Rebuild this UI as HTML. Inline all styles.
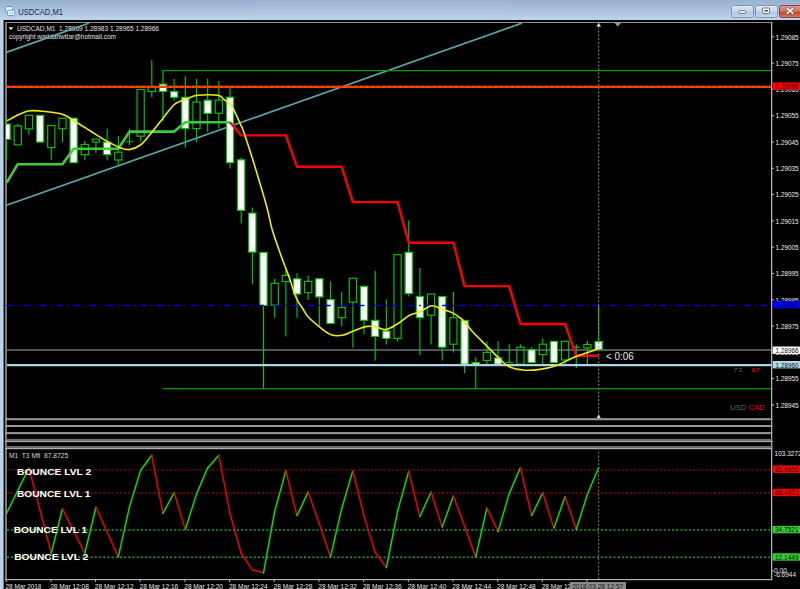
<!DOCTYPE html><html><head><meta charset="utf-8"><style>html,body{margin:0;padding:0;width:800px;height:589px;overflow:hidden;background:#bcd2e9}svg{display:block}text{font-family:'Liberation Sans',sans-serif}</style></head><body>
<svg width="800" height="589" viewBox="0 0 800 589">
<defs><linearGradient id="tg" x1="0" y1="0" x2="0" y2="1"><stop offset="0" stop-color="#97b1d0"/><stop offset="1" stop-color="#bed4eb"/></linearGradient><linearGradient id="bg" x1="0" y1="0" x2="0" y2="1"><stop offset="0" stop-color="#dfeaf6"/><stop offset="0.5" stop-color="#c3d6ec"/><stop offset="0.55" stop-color="#aec6e1"/><stop offset="1" stop-color="#c6d9ee"/></linearGradient><linearGradient id="cg" x1="0" y1="0" x2="0" y2="1"><stop offset="0" stop-color="#e6a090"/><stop offset="0.5" stop-color="#d26a55"/><stop offset="0.55" stop-color="#c0402a"/><stop offset="1" stop-color="#d87a5a"/></linearGradient><clipPath id="mc"><rect x="6" y="23" width="765.5" height="395"/></clipPath><clipPath id="ic"><rect x="7" y="448" width="764.5" height="131"/></clipPath></defs>
<rect x="0" y="0" width="800" height="20" fill="url(#tg)"/>
<g><rect x="5.4" y="6.6" width="7.4" height="5.6" rx="1" fill="#dfeafc" stroke="#5b8fe2" stroke-width="0.9"/><path d="M6.6 8.4 h1.2 M8.8 8.4 h1.2 M10.6 8.4 h1.2 M6.6 10.2 h1" stroke="#ffffff" stroke-width="1"/><rect x="7.6" y="10.3" width="7" height="5.3" rx="1" fill="#f2f6ff" stroke="#5b8fe2" stroke-width="0.9"/><path d="M9.4 13.6 l1.2 -1.2 l1.2 1.2 l1.2 -1" fill="none" stroke="#7aa6f0" stroke-width="0.9"/></g>
<text x="18.3" y="14.7" font-size="9.6" fill="#1e2a44" textLength="44.7" lengthAdjust="spacingAndGlyphs">USDCAD,M1</text>
<rect x="731.5" y="5.5" width="22" height="12" rx="2" fill="url(#bg)" stroke="#8298b0"/>
<rect x="738.8" y="10.8" width="7.2" height="2.6" rx="0.8" fill="#fff" stroke="#4c5868" stroke-width="0.8"/>
<rect x="755.5" y="5.5" width="22" height="12" rx="2" fill="url(#bg)" stroke="#8298b0"/>
<rect x="762.6" y="8" width="7" height="5.6" rx="0.8" fill="#fff" stroke="#4c5868" stroke-width="0.8"/>
<rect x="764.3" y="10" width="3.6" height="1.6" fill="#4c5868"/>
<rect x="779.5" y="5.5" width="24" height="12" rx="2" fill="url(#cg)" stroke="#7a4a52"/>
<path d="M787.2 8.5 L792.8 13.1 M792.8 8.5 L787.2 13.1" stroke="#6a5a66" stroke-width="2.9" stroke-linecap="round"/>
<path d="M787.2 8.5 L792.8 13.1 M792.8 8.5 L787.2 13.1" stroke="#f0f0f4" stroke-width="1.7" stroke-linecap="round"/>
<rect x="3" y="20" width="797" height="569" fill="#000"/>
<rect x="3" y="20" width="0.8" height="569" fill="#8c96a0"/>
<rect x="5" y="22" width="766.5" height="1" fill="#8e8e8e"/>
<rect x="5" y="22" width="2" height="557.6" fill="#7a7a7a"/>
<g clip-path="url(#mc)">
<line x1="6.5" y1="205.3" x2="521.7" y2="23.2" stroke="#5aa8a8" stroke-width="1.7"/>
<path d="M162.9 121.1 V70.6 H771" fill="none" stroke="#00a000" stroke-width="1.3"/>
<line x1="163" y1="388.6" x2="771" y2="388.6" stroke="#00a000" stroke-width="1.3"/>
<line x1="7" y1="350" x2="771" y2="350" stroke="#4c545c" stroke-width="2"/>
<line x1="162.9" y1="70.6" x2="162.9" y2="121.1" stroke="#008a00" stroke-width="1.3"/>
<line x1="6.6" y1="118.3" x2="6.6" y2="124" stroke="#00c800" stroke-width="1.15"/>
<line x1="6.6" y1="139.4" x2="6.6" y2="160" stroke="#00c800" stroke-width="1.15"/>
<rect x="3" y="124" width="7.2" height="15.4" fill="#fff" stroke="#00c800" stroke-width="1.15"/>
<line x1="17.77" y1="123.8" x2="17.77" y2="125.8" stroke="#00c800" stroke-width="1.15"/>
<rect x="14.17" y="125.8" width="7.2" height="19.1" fill="none" stroke="#00c800" stroke-width="1.15"/>
<line x1="28.94" y1="128.9" x2="28.94" y2="134.7" stroke="#00c800" stroke-width="1.15"/>
<rect x="25.34" y="115.3" width="7.2" height="13.6" fill="none" stroke="#00c800" stroke-width="1.15"/>
<rect x="36.51" y="115.3" width="7.2" height="26.7" fill="#fff" stroke="#00c800" stroke-width="1.15"/>
<line x1="51.28" y1="147.6" x2="51.28" y2="159.8" stroke="#00c800" stroke-width="1.15"/>
<rect x="47.68" y="125.5" width="7.2" height="22.1" fill="none" stroke="#00c800" stroke-width="1.15"/>
<line x1="62.45" y1="128.7" x2="62.45" y2="142" stroke="#00c800" stroke-width="1.15"/>
<rect x="58.85" y="118.2" width="7.2" height="10.5" fill="none" stroke="#00c800" stroke-width="1.15"/>
<rect x="70.02" y="118.2" width="7.2" height="44.5" fill="#fff" stroke="#00c800" stroke-width="1.15"/>
<line x1="84.79" y1="141" x2="84.79" y2="144.5" stroke="#00c800" stroke-width="1.15"/>
<line x1="84.79" y1="154.7" x2="84.79" y2="160.2" stroke="#00c800" stroke-width="1.15"/>
<rect x="81.19" y="144.5" width="7.2" height="10.2" fill="none" stroke="#00c800" stroke-width="1.15"/>
<line x1="95.96" y1="142" x2="95.96" y2="152.7" stroke="#00c800" stroke-width="1.15"/>
<rect x="92.36" y="139.1" width="7.2" height="2.9" fill="none" stroke="#00c800" stroke-width="1.15"/>
<line x1="107.13" y1="128.4" x2="107.13" y2="142" stroke="#00c800" stroke-width="1.15"/>
<line x1="107.13" y1="154.7" x2="107.13" y2="160.2" stroke="#00c800" stroke-width="1.15"/>
<rect x="103.53" y="142" width="7.2" height="12.7" fill="#fff" stroke="#00c800" stroke-width="1.15"/>
<line x1="118.3" y1="136" x2="118.3" y2="152.2" stroke="#00c800" stroke-width="1.15"/>
<line x1="118.3" y1="160" x2="118.3" y2="165.3" stroke="#00c800" stroke-width="1.15"/>
<rect x="114.7" y="152.2" width="7.2" height="7.8" fill="none" stroke="#00c800" stroke-width="1.15"/>
<line x1="129.47" y1="128.4" x2="129.47" y2="145" stroke="#00c800" stroke-width="1.15"/>
<line x1="125.87" y1="141.7" x2="133.07" y2="141.7" stroke="#00c800" stroke-width="1.15"/>
<line x1="140.64" y1="136.2" x2="140.64" y2="141.7" stroke="#00c800" stroke-width="1.15"/>
<rect x="137.04" y="89.5" width="7.2" height="46.7" fill="none" stroke="#00c800" stroke-width="1.15"/>
<line x1="151.81" y1="60.2" x2="151.81" y2="86.7" stroke="#00c800" stroke-width="1.15"/>
<line x1="151.81" y1="91.5" x2="151.81" y2="97.3" stroke="#00c800" stroke-width="1.15"/>
<rect x="148.21" y="86.7" width="7.2" height="4.8" fill="none" stroke="#00c800" stroke-width="1.15"/>
<rect x="159.38" y="84.1" width="7.2" height="7.4" fill="#fff" stroke="#00c800" stroke-width="1.15"/>
<line x1="174.15" y1="79" x2="174.15" y2="91.5" stroke="#00c800" stroke-width="1.15"/>
<line x1="174.15" y1="97.3" x2="174.15" y2="100.5" stroke="#00c800" stroke-width="1.15"/>
<rect x="170.55" y="91.5" width="7.2" height="5.8" fill="#fff" stroke="#00c800" stroke-width="1.15"/>
<line x1="185.32" y1="76.2" x2="185.32" y2="97.3" stroke="#00c800" stroke-width="1.15"/>
<line x1="185.32" y1="128.6" x2="185.32" y2="147.5" stroke="#00c800" stroke-width="1.15"/>
<rect x="181.72" y="97.3" width="7.2" height="31.3" fill="#fff" stroke="#00c800" stroke-width="1.15"/>
<line x1="196.49" y1="78.8" x2="196.49" y2="102" stroke="#00c800" stroke-width="1.15"/>
<line x1="196.49" y1="128.6" x2="196.49" y2="142.2" stroke="#00c800" stroke-width="1.15"/>
<rect x="192.89" y="102" width="7.2" height="26.6" fill="none" stroke="#00c800" stroke-width="1.15"/>
<line x1="207.66" y1="78.8" x2="207.66" y2="100.2" stroke="#00c800" stroke-width="1.15"/>
<line x1="207.66" y1="113.4" x2="207.66" y2="131.7" stroke="#00c800" stroke-width="1.15"/>
<rect x="204.06" y="100.2" width="7.2" height="13.2" fill="#fff" stroke="#00c800" stroke-width="1.15"/>
<line x1="218.83" y1="81.1" x2="218.83" y2="100.1" stroke="#00c800" stroke-width="1.15"/>
<line x1="218.83" y1="113.2" x2="218.83" y2="128.4" stroke="#00c800" stroke-width="1.15"/>
<rect x="215.23" y="100.1" width="7.2" height="13.1" fill="none" stroke="#00c800" stroke-width="1.15"/>
<line x1="230" y1="86.9" x2="230" y2="97.2" stroke="#00c800" stroke-width="1.15"/>
<line x1="230" y1="162.7" x2="230" y2="168.6" stroke="#00c800" stroke-width="1.15"/>
<rect x="226.4" y="97.2" width="7.2" height="65.5" fill="#fff" stroke="#00c800" stroke-width="1.15"/>
<line x1="241.17" y1="157.6" x2="241.17" y2="159.8" stroke="#00c800" stroke-width="1.15"/>
<line x1="241.17" y1="210.3" x2="241.17" y2="223.6" stroke="#00c800" stroke-width="1.15"/>
<rect x="237.57" y="159.8" width="7.2" height="50.5" fill="#fff" stroke="#00c800" stroke-width="1.15"/>
<line x1="252.34" y1="207.4" x2="252.34" y2="213.1" stroke="#00c800" stroke-width="1.15"/>
<line x1="252.34" y1="252.1" x2="252.34" y2="283.9" stroke="#00c800" stroke-width="1.15"/>
<rect x="248.74" y="213.1" width="7.2" height="39" fill="#fff" stroke="#00c800" stroke-width="1.15"/>
<line x1="263.51" y1="305.4" x2="263.51" y2="388.4" stroke="#00c800" stroke-width="1.15"/>
<rect x="259.91" y="252.4" width="7.2" height="53" fill="#fff" stroke="#00c800" stroke-width="1.15"/>
<line x1="274.68" y1="278.8" x2="274.68" y2="283.3" stroke="#00c800" stroke-width="1.15"/>
<line x1="274.68" y1="305.1" x2="274.68" y2="317.8" stroke="#00c800" stroke-width="1.15"/>
<rect x="271.08" y="283.3" width="7.2" height="21.8" fill="none" stroke="#00c800" stroke-width="1.15"/>
<line x1="285.85" y1="268.6" x2="285.85" y2="275.4" stroke="#00c800" stroke-width="1.15"/>
<line x1="285.85" y1="281.6" x2="285.85" y2="336.5" stroke="#00c800" stroke-width="1.15"/>
<rect x="282.25" y="275.4" width="7.2" height="6.2" fill="none" stroke="#00c800" stroke-width="1.15"/>
<line x1="297.02" y1="273.2" x2="297.02" y2="278.8" stroke="#00c800" stroke-width="1.15"/>
<line x1="297.02" y1="294" x2="297.02" y2="317.8" stroke="#00c800" stroke-width="1.15"/>
<rect x="293.42" y="278.8" width="7.2" height="15.2" fill="#fff" stroke="#00c800" stroke-width="1.15"/>
<line x1="308.19" y1="275.4" x2="308.19" y2="281.3" stroke="#00c800" stroke-width="1.15"/>
<line x1="308.19" y1="292.7" x2="308.19" y2="300" stroke="#00c800" stroke-width="1.15"/>
<rect x="304.59" y="281.3" width="7.2" height="11.4" fill="none" stroke="#00c800" stroke-width="1.15"/>
<line x1="319.36" y1="296.9" x2="319.36" y2="326.3" stroke="#00c800" stroke-width="1.15"/>
<rect x="315.76" y="278.8" width="7.2" height="18.1" fill="#fff" stroke="#00c800" stroke-width="1.15"/>
<line x1="330.53" y1="281.3" x2="330.53" y2="299.6" stroke="#00c800" stroke-width="1.15"/>
<rect x="326.93" y="299.6" width="7.2" height="23.8" fill="#fff" stroke="#00c800" stroke-width="1.15"/>
<line x1="341.7" y1="291.9" x2="341.7" y2="307.5" stroke="#00c800" stroke-width="1.15"/>
<line x1="341.7" y1="317.7" x2="341.7" y2="326.2" stroke="#00c800" stroke-width="1.15"/>
<rect x="338.1" y="307.5" width="7.2" height="10.2" fill="none" stroke="#00c800" stroke-width="1.15"/>
<line x1="352.87" y1="302.1" x2="352.87" y2="347.4" stroke="#00c800" stroke-width="1.15"/>
<rect x="349.27" y="278.3" width="7.2" height="23.8" fill="none" stroke="#00c800" stroke-width="1.15"/>
<line x1="364.04" y1="320.3" x2="364.04" y2="333.9" stroke="#00c800" stroke-width="1.15"/>
<rect x="360.44" y="286.3" width="7.2" height="34" fill="#fff" stroke="#00c800" stroke-width="1.15"/>
<line x1="375.21" y1="271" x2="375.21" y2="320.3" stroke="#00c800" stroke-width="1.15"/>
<line x1="375.21" y1="336.4" x2="375.21" y2="360.5" stroke="#00c800" stroke-width="1.15"/>
<rect x="371.61" y="320.3" width="7.2" height="16.1" fill="#fff" stroke="#00c800" stroke-width="1.15"/>
<line x1="386.38" y1="299.4" x2="386.38" y2="331" stroke="#00c800" stroke-width="1.15"/>
<line x1="386.38" y1="338.4" x2="386.38" y2="344.5" stroke="#00c800" stroke-width="1.15"/>
<rect x="382.78" y="331" width="7.2" height="7.4" fill="#fff" stroke="#00c800" stroke-width="1.15"/>
<line x1="397.55" y1="338.4" x2="397.55" y2="341.6" stroke="#00c800" stroke-width="1.15"/>
<rect x="393.95" y="254.7" width="7.2" height="83.7" fill="none" stroke="#00c800" stroke-width="1.15"/>
<line x1="408.72" y1="220.4" x2="408.72" y2="252.2" stroke="#00c800" stroke-width="1.15"/>
<line x1="408.72" y1="293.6" x2="408.72" y2="296.5" stroke="#00c800" stroke-width="1.15"/>
<rect x="405.12" y="252.2" width="7.2" height="41.4" fill="#fff" stroke="#00c800" stroke-width="1.15"/>
<line x1="419.89" y1="268" x2="419.89" y2="296.5" stroke="#00c800" stroke-width="1.15"/>
<line x1="419.89" y1="317.7" x2="419.89" y2="355" stroke="#00c800" stroke-width="1.15"/>
<rect x="416.29" y="296.5" width="7.2" height="21.2" fill="#fff" stroke="#00c800" stroke-width="1.15"/>
<line x1="431.06" y1="315.2" x2="431.06" y2="344.5" stroke="#00c800" stroke-width="1.15"/>
<rect x="427.46" y="294" width="7.2" height="21.2" fill="none" stroke="#00c800" stroke-width="1.15"/>
<line x1="442.23" y1="347.2" x2="442.23" y2="360.5" stroke="#00c800" stroke-width="1.15"/>
<rect x="438.63" y="296.5" width="7.2" height="50.7" fill="#fff" stroke="#00c800" stroke-width="1.15"/>
<line x1="453.4" y1="291.9" x2="453.4" y2="317.7" stroke="#00c800" stroke-width="1.15"/>
<line x1="453.4" y1="344.2" x2="453.4" y2="352.4" stroke="#00c800" stroke-width="1.15"/>
<rect x="449.8" y="317.7" width="7.2" height="26.5" fill="none" stroke="#00c800" stroke-width="1.15"/>
<line x1="464.57" y1="364.2" x2="464.57" y2="373" stroke="#00c800" stroke-width="1.15"/>
<rect x="460.97" y="320.4" width="7.2" height="43.8" fill="#fff" stroke="#00c800" stroke-width="1.15"/>
<line x1="475.74" y1="357.3" x2="475.74" y2="362.5" stroke="#00c800" stroke-width="1.15"/>
<line x1="475.74" y1="364.3" x2="475.74" y2="388.6" stroke="#00c800" stroke-width="1.15"/>
<rect x="472.14" y="362.5" width="7.2" height="1.8" fill="#fff" stroke="#00c800" stroke-width="1.15"/>
<line x1="486.91" y1="341.4" x2="486.91" y2="352.4" stroke="#00c800" stroke-width="1.15"/>
<line x1="486.91" y1="360.4" x2="486.91" y2="364.2" stroke="#00c800" stroke-width="1.15"/>
<rect x="483.31" y="352.4" width="7.2" height="8" fill="none" stroke="#00c800" stroke-width="1.15"/>
<line x1="498.08" y1="341.3" x2="498.08" y2="357.9" stroke="#00c800" stroke-width="1.15"/>
<rect x="494.48" y="357.9" width="7.2" height="6.3" fill="#fff" stroke="#00c800" stroke-width="1.15"/>
<line x1="509.25" y1="344.2" x2="509.25" y2="362.5" stroke="#00c800" stroke-width="1.15"/>
<line x1="505.65" y1="362.5" x2="512.85" y2="362.5" stroke="#00c800" stroke-width="1.15"/>
<line x1="520.42" y1="344.2" x2="520.42" y2="347.2" stroke="#00c800" stroke-width="1.15"/>
<rect x="516.82" y="347.2" width="7.2" height="17" fill="none" stroke="#00c800" stroke-width="1.15"/>
<line x1="531.59" y1="347.2" x2="531.59" y2="349.8" stroke="#00c800" stroke-width="1.15"/>
<rect x="527.99" y="349.8" width="7.2" height="12.7" fill="#fff" stroke="#00c800" stroke-width="1.15"/>
<line x1="542.76" y1="338.4" x2="542.76" y2="344.2" stroke="#00c800" stroke-width="1.15"/>
<line x1="542.76" y1="354.6" x2="542.76" y2="364.2" stroke="#00c800" stroke-width="1.15"/>
<rect x="539.16" y="344.2" width="7.2" height="10.4" fill="none" stroke="#00c800" stroke-width="1.15"/>
<rect x="550.33" y="341.3" width="7.2" height="21.2" fill="#fff" stroke="#00c800" stroke-width="1.15"/>
<line x1="565.1" y1="360" x2="565.1" y2="364.2" stroke="#00c800" stroke-width="1.15"/>
<rect x="561.5" y="341.3" width="7.2" height="18.7" fill="none" stroke="#00c800" stroke-width="1.15"/>
<line x1="576.27" y1="344.2" x2="576.27" y2="368.2" stroke="#00c800" stroke-width="1.15"/>
<line x1="572.67" y1="347.2" x2="579.87" y2="347.2" stroke="#00c800" stroke-width="1.15"/>
<line x1="587.44" y1="341" x2="587.44" y2="344.5" stroke="#00c800" stroke-width="1.15"/>
<line x1="587.44" y1="347.9" x2="587.44" y2="364.2" stroke="#00c800" stroke-width="1.15"/>
<rect x="583.84" y="344.5" width="7.2" height="3.4" fill="none" stroke="#00c800" stroke-width="1.15"/>
<line x1="598.61" y1="305.4" x2="598.61" y2="341.5" stroke="#00c800" stroke-width="1.15"/>
<rect x="595.01" y="341.5" width="7.2" height="8.1" fill="#fff" stroke="#00c800" stroke-width="1.15"/>
<line x1="7" y1="86.8" x2="771" y2="86.8" stroke="#ff3400" stroke-width="2.3"/>
<line x1="7" y1="86.8" x2="771" y2="86.8" stroke="#ff4a0c" stroke-width="2.3" stroke-dasharray="3 2.6"/>
<line x1="6.15" y1="305.5" x2="771" y2="305.5" stroke="#0000d8" stroke-width="1.5" stroke-dasharray="6.2 4.4 1.8 4.365"/>
<line x1="7" y1="365.2" x2="771" y2="365.2" stroke="#a8d4e6" stroke-width="2.2"/>
<polyline points="6.6,182.8 17.77,164.2 28.94,164.2 40.11,164.2 51.28,164.2 62.45,164.2 73.62,148.8 84.79,148.8 95.96,148.8 107.13,148.8 118.3,148.8 129.47,131.6 140.64,131.6 151.81,131.6 162.98,131.6 174.15,131.6 185.32,122.2 196.49,122.2 207.66,122.2 218.83,122.2 230,122.2" fill="none" stroke="#3ccc3c" stroke-width="2.6" stroke-linejoin="round"/>
<polyline points="230,122.2 241.17,135.4 252.34,135.4 263.51,135.4 274.68,135.4 285.85,135.4 297.02,166.7 308.19,166.7 319.36,166.7 330.53,166.7 341.7,166.7 352.87,202.1 364.04,202.1 375.21,202.1 386.38,202.1 397.55,202.1 408.72,242.8 419.89,242.8 431.06,242.8 442.23,242.8 453.4,242.8 464.57,286.1 475.74,286.1 486.91,286.1 498.08,286.1 509.25,286.1 520.42,324 531.59,324 542.76,324 553.93,324 565.1,324 576.27,355.8 587.44,355.8 598.61,355.8" fill="none" stroke="#ff0000" stroke-width="2.4" stroke-linejoin="round"/>
<path d="M7 120.8 C8.63 119.93 13.3 117.23 16.8 115.6 C20.3 113.97 24.27 111.78 28 111 C31.73 110.22 33.6 110.38 39.2 110.9 C44.8 111.42 55.68 112.38 61.6 114.1 C67.52 115.82 70.02 118.47 74.7 121.2 C79.38 123.93 84.72 127.38 89.7 130.5 C94.68 133.62 99.63 137.08 104.6 139.9 C109.57 142.72 115.38 145.78 119.5 147.4 C123.62 149.02 125.82 150 129.3 149.6 C132.78 149.2 136.95 147.52 140.4 145 C143.85 142.48 146.13 139.1 150 134.5 C153.87 129.9 159.63 122.32 163.6 117.4 C167.57 112.48 171.07 107.67 173.8 105 C176.53 102.33 177.65 102.5 180 101.4 C182.35 100.3 185.03 99.42 187.9 98.4 C190.77 97.38 192.25 95.82 197.2 95.3 C202.15 94.78 213.27 94.72 217.6 95.3 C221.93 95.88 221.37 97.53 223.2 98.8 C225.03 100.07 227.13 101.65 228.6 102.9 C230.07 104.15 230.87 104.6 232 106.3 C233.13 108 234.27 110.72 235.4 113.1 C236.53 115.48 237.55 117.87 238.8 120.6 C240.05 123.33 241.77 126.67 242.9 129.5 C244.03 132.33 244.5 134.27 245.6 137.6 C246.7 140.93 248.17 145.38 249.5 149.5 C250.83 153.62 252.07 157.35 253.6 162.3 C255.13 167.25 257 173.55 258.7 179.2 C260.4 184.85 262.25 190.82 263.8 196.2 C265.35 201.58 266.58 205.87 268 211.5 C269.42 217.13 270.12 222.62 272.3 230 C274.48 237.38 278.35 248.1 281.1 255.8 C283.85 263.5 286.25 269.12 288.8 276.2 C291.35 283.28 294 292.78 296.4 298.3 C298.8 303.82 301.22 306.18 303.2 309.3 C305.18 312.42 305.18 313.73 308.3 317 C311.42 320.27 318.08 325.93 321.9 328.9 C325.72 331.87 327.82 333.73 331.2 334.8 C334.58 335.87 338.73 335.83 342.2 335.3 C345.67 334.77 348.12 333.05 352 331.6 C355.88 330.15 361.67 327.43 365.5 326.6 C369.33 325.77 371.62 326.1 375 326.6 C378.38 327.1 382.02 330.08 385.8 329.6 C389.58 329.12 393.73 326.1 397.7 323.7 C401.67 321.3 405.92 317.18 409.6 315.2 C413.28 313.22 416.12 313.37 419.8 311.8 C423.48 310.23 428.02 306.23 431.7 305.8 C435.38 305.37 438.52 308.07 441.9 309.2 C445.28 310.33 448.62 310.9 452 312.6 C455.38 314.3 458.6 316.03 462.2 319.4 C465.8 322.77 469.43 328.3 473.6 332.8 C477.77 337.3 482.97 342.15 487.2 346.4 C491.43 350.65 495.33 354.9 499 358.3 C502.67 361.7 505.23 364.85 509.2 366.8 C513.17 368.75 517.98 369.53 522.8 370 C527.62 370.47 532.72 370.28 538.1 369.6 C543.48 368.92 548.67 368.12 555.1 365.9 C561.53 363.68 569.48 359.15 576.7 356.3 C583.92 353.45 594.78 350.05 598.4 348.8" fill="none" stroke="#eeee00" stroke-width="1.6" stroke-linejoin="round"/>
<line x1="598.7" y1="23" x2="598.7" y2="418" stroke="#8a8a8a" stroke-width="1.1" stroke-dasharray="1.8 2"/>
<path d="M596.3 26.5 L598.7 23.2 L601.1 26.5 Z" fill="#e8e8e8"/>
<path d="M614.5 23 L621 23 L617.7 26.6 Z" fill="#8a9ab0"/>
<path d="M596.9 418.3 L598.7 415.2 L600.5 418.3 Z" fill="#f0f0f0" stroke="#f0f0f0" stroke-width="0.6" stroke-linejoin="round"/>
<path d="M8.6 27.3 L13.2 27.3 L10.9 30.3 Z" fill="#e8e8e8"/>
<text x="17" y="31" font-size="7" fill="#e4e4e4" textLength="142" lengthAdjust="spacingAndGlyphs" style="white-space:pre">USDCAD,M1  1.28969 1.28983 1.28965 1.28966</text>
<text x="9" y="39.1" font-size="7" fill="#e0e0e0" textLength="107" lengthAdjust="spacingAndGlyphs">copyright waddahwttar@hotmail.com</text>
<line x1="6.25" y1="52.4" x2="88.75" y2="23.25" stroke="#5aa8a8" stroke-width="1.7"/>
<text x="605.9" y="359.6" font-size="11.6" fill="#e6e6e6" textLength="27.9" lengthAdjust="spacingAndGlyphs">&lt; 0:06</text>
<text x="734" y="371.8" font-size="5.8" fill="#6a6a6a">7.3</text>
<text x="751.5" y="371.8" font-size="5.8" font-weight="bold" fill="#e00000">0.7</text>
<text x="730.3" y="410.4" font-size="7.6" fill="#5c6470">USD</text>
<text x="748.5" y="410.4" font-size="7.6" fill="#ee0000">CAD</text>
</g>
<rect x="771" y="22" width="1.3" height="558" fill="#b0b0b0"/>
<rect x="5" y="579" width="767.3" height="1.2" fill="#b0b0b0"/>
<rect x="5" y="418.2" width="767.3" height="2" fill="#9a9a9a"/>
<rect x="5" y="425" width="767.3" height="2" fill="#9a9a9a"/>
<rect x="5" y="432.1" width="767.3" height="2" fill="#9a9a9a"/>
<rect x="5" y="438.8" width="767.3" height="1.8" fill="#6c6c6c"/>
<rect x="5" y="440.6" width="767.3" height="1.5" fill="#b0b0b0"/>
<rect x="5" y="445.9" width="767.3" height="1.8" fill="#6c6c6c"/>
<rect x="5" y="447.7" width="767.3" height="1.5" fill="#b0b0b0"/>
<rect x="772" y="36.3" width="2.2" height="1" fill="#b0b0b0"/>
<text x="775.6" y="39.6" font-size="7.2" fill="#ececec" textLength="23" lengthAdjust="spacingAndGlyphs">1.29085</text>
<rect x="772" y="62.59" width="2.2" height="1" fill="#b0b0b0"/>
<text x="775.6" y="65.89" font-size="7.2" fill="#ececec" textLength="23" lengthAdjust="spacingAndGlyphs">1.29075</text>
<rect x="772" y="88.89" width="2.2" height="1" fill="#b0b0b0"/>
<text x="775.6" y="92.19" font-size="7.2" fill="#ececec" textLength="23" lengthAdjust="spacingAndGlyphs">1.29065</text>
<rect x="772" y="115.18" width="2.2" height="1" fill="#b0b0b0"/>
<text x="775.6" y="118.48" font-size="7.2" fill="#ececec" textLength="23" lengthAdjust="spacingAndGlyphs">1.29055</text>
<rect x="772" y="141.47" width="2.2" height="1" fill="#b0b0b0"/>
<text x="775.6" y="144.77" font-size="7.2" fill="#ececec" textLength="23" lengthAdjust="spacingAndGlyphs">1.29045</text>
<rect x="772" y="167.76" width="2.2" height="1" fill="#b0b0b0"/>
<text x="775.6" y="171.06" font-size="7.2" fill="#ececec" textLength="23" lengthAdjust="spacingAndGlyphs">1.29035</text>
<rect x="772" y="194.06" width="2.2" height="1" fill="#b0b0b0"/>
<text x="775.6" y="197.36" font-size="7.2" fill="#ececec" textLength="23" lengthAdjust="spacingAndGlyphs">1.29025</text>
<rect x="772" y="220.35" width="2.2" height="1" fill="#b0b0b0"/>
<text x="775.6" y="223.65" font-size="7.2" fill="#ececec" textLength="23" lengthAdjust="spacingAndGlyphs">1.29015</text>
<rect x="772" y="246.64" width="2.2" height="1" fill="#b0b0b0"/>
<text x="775.6" y="249.94" font-size="7.2" fill="#ececec" textLength="23" lengthAdjust="spacingAndGlyphs">1.29005</text>
<rect x="772" y="272.94" width="2.2" height="1" fill="#b0b0b0"/>
<text x="775.6" y="276.24" font-size="7.2" fill="#ececec" textLength="23" lengthAdjust="spacingAndGlyphs">1.28995</text>
<rect x="772" y="299.23" width="2.2" height="1" fill="#b0b0b0"/>
<text x="775.6" y="302.53" font-size="7.2" fill="#ececec" textLength="23" lengthAdjust="spacingAndGlyphs">1.28985</text>
<rect x="772" y="325.52" width="2.2" height="1" fill="#b0b0b0"/>
<text x="775.6" y="328.82" font-size="7.2" fill="#ececec" textLength="23" lengthAdjust="spacingAndGlyphs">1.28975</text>
<rect x="772" y="351.82" width="2.2" height="1" fill="#b0b0b0"/>
<text x="775.6" y="355.12" font-size="7.2" fill="#ececec" textLength="23" lengthAdjust="spacingAndGlyphs">1.28965</text>
<rect x="772" y="378.11" width="2.2" height="1" fill="#b0b0b0"/>
<text x="775.6" y="381.41" font-size="7.2" fill="#ececec" textLength="23" lengthAdjust="spacingAndGlyphs">1.28955</text>
<rect x="772" y="404.4" width="2.2" height="1" fill="#b0b0b0"/>
<text x="775.6" y="407.7" font-size="7.2" fill="#ececec" textLength="23" lengthAdjust="spacingAndGlyphs">1.28945</text>
<rect x="772.6" y="82.5" width="27.4" height="7.4" fill="#ff0000"/>
<text x="775.6" y="89" font-size="7.2" fill="#101010" textLength="23" lengthAdjust="spacingAndGlyphs">1.29066</text>
<rect x="772.6" y="300.9" width="27.4" height="7.4" fill="#0000ff"/>
<text x="775.6" y="307.4" font-size="7.2" fill="#000040" textLength="23" lengthAdjust="spacingAndGlyphs">1.28983</text>
<rect x="772.6" y="346.5" width="27.4" height="7.4" fill="#ffffff"/>
<text x="775.6" y="353" font-size="7.2" fill="#101010" textLength="23" lengthAdjust="spacingAndGlyphs">1.28966</text>
<rect x="772.6" y="361" width="27.4" height="7.4" fill="#add8e6"/>
<text x="775.6" y="367.5" font-size="7.2" fill="#101010" textLength="23" lengthAdjust="spacingAndGlyphs">1.28960</text>
<g clip-path="url(#ic)">
<line x1="7" y1="469.9" x2="771" y2="469.9" stroke="#980000" stroke-width="1.4" stroke-dasharray="2 2.183"/>
<line x1="7" y1="493" x2="771" y2="493" stroke="#980000" stroke-width="1.4" stroke-dasharray="2 2.183"/>
<line x1="7" y1="530" x2="771" y2="530" stroke="#2c9c2c" stroke-width="1.4" stroke-dasharray="2 2.183"/>
<line x1="7" y1="557.2" x2="771" y2="557.2" stroke="#2c9c2c" stroke-width="1.4" stroke-dasharray="2 2.183"/>
<line x1="598.6" y1="448" x2="598.6" y2="579" stroke="#7a7a7a" stroke-width="1.1" stroke-dasharray="1.8 2"/>
<line x1="6.6" y1="513.3" x2="17.77" y2="490.6" stroke="#00e000" stroke-width="1.5" stroke-linecap="round"/>
<line x1="17.77" y1="490.6" x2="28.94" y2="467.9" stroke="#00e000" stroke-width="1.5" stroke-linecap="round"/>
<line x1="28.94" y1="467.9" x2="40.11" y2="510.5" stroke="#ee0000" stroke-width="1.5" stroke-linecap="round"/>
<line x1="40.11" y1="510.5" x2="51.28" y2="553.2" stroke="#ee0000" stroke-width="1.5" stroke-linecap="round"/>
<line x1="51.28" y1="553.2" x2="62.45" y2="508.7" stroke="#00e000" stroke-width="1.5" stroke-linecap="round"/>
<line x1="62.45" y1="508.7" x2="73.62" y2="531" stroke="#ee0000" stroke-width="1.5" stroke-linecap="round"/>
<line x1="73.62" y1="531" x2="84.79" y2="553.2" stroke="#ee0000" stroke-width="1.5" stroke-linecap="round"/>
<line x1="84.79" y1="553.2" x2="95.96" y2="507.3" stroke="#00e000" stroke-width="1.5" stroke-linecap="round"/>
<line x1="95.96" y1="507.3" x2="107.13" y2="532" stroke="#ee0000" stroke-width="1.5" stroke-linecap="round"/>
<line x1="107.13" y1="532" x2="118.3" y2="556.9" stroke="#ee0000" stroke-width="1.5" stroke-linecap="round"/>
<line x1="118.3" y1="556.9" x2="129.47" y2="506.9" stroke="#00e000" stroke-width="1.5" stroke-linecap="round"/>
<line x1="129.47" y1="506.9" x2="140.64" y2="470.2" stroke="#00e000" stroke-width="1.5" stroke-linecap="round"/>
<line x1="140.64" y1="470.2" x2="151.81" y2="455.3" stroke="#00e000" stroke-width="1.5" stroke-linecap="round"/>
<line x1="151.81" y1="455.3" x2="162.98" y2="513.3" stroke="#ee0000" stroke-width="1.5" stroke-linecap="round"/>
<line x1="162.98" y1="513.3" x2="174.15" y2="492.7" stroke="#00e000" stroke-width="1.5" stroke-linecap="round"/>
<line x1="174.15" y1="492.7" x2="185.32" y2="529.4" stroke="#ee0000" stroke-width="1.5" stroke-linecap="round"/>
<line x1="185.32" y1="529.4" x2="196.49" y2="494.3" stroke="#00e000" stroke-width="1.5" stroke-linecap="round"/>
<line x1="196.49" y1="494.3" x2="207.66" y2="467.9" stroke="#00e000" stroke-width="1.5" stroke-linecap="round"/>
<line x1="207.66" y1="467.9" x2="218.83" y2="455.3" stroke="#00e000" stroke-width="1.5" stroke-linecap="round"/>
<line x1="218.83" y1="455.3" x2="230" y2="513.3" stroke="#ee0000" stroke-width="1.5" stroke-linecap="round"/>
<line x1="230" y1="513.3" x2="241.17" y2="553.2" stroke="#ee0000" stroke-width="1.5" stroke-linecap="round"/>
<line x1="241.17" y1="553.2" x2="252.34" y2="569.9" stroke="#ee0000" stroke-width="1.5" stroke-linecap="round"/>
<line x1="252.34" y1="569.9" x2="263.51" y2="572.9" stroke="#ee0000" stroke-width="1.5" stroke-linecap="round"/>
<line x1="263.51" y1="572.9" x2="274.68" y2="511.5" stroke="#00e000" stroke-width="1.5" stroke-linecap="round"/>
<line x1="274.68" y1="511.5" x2="285.85" y2="470.7" stroke="#00e000" stroke-width="1.5" stroke-linecap="round"/>
<line x1="285.85" y1="470.7" x2="297.02" y2="515.6" stroke="#ee0000" stroke-width="1.5" stroke-linecap="round"/>
<line x1="297.02" y1="515.6" x2="308.19" y2="492" stroke="#00e000" stroke-width="1.5" stroke-linecap="round"/>
<line x1="308.19" y1="492" x2="319.36" y2="524" stroke="#ee0000" stroke-width="1.5" stroke-linecap="round"/>
<line x1="319.36" y1="524" x2="330.53" y2="556.9" stroke="#ee0000" stroke-width="1.5" stroke-linecap="round"/>
<line x1="330.53" y1="556.9" x2="341.7" y2="508.7" stroke="#00e000" stroke-width="1.5" stroke-linecap="round"/>
<line x1="341.7" y1="508.7" x2="352.87" y2="470.7" stroke="#00e000" stroke-width="1.5" stroke-linecap="round"/>
<line x1="352.87" y1="470.7" x2="364.04" y2="516" stroke="#ee0000" stroke-width="1.5" stroke-linecap="round"/>
<line x1="364.04" y1="516" x2="375.21" y2="552.3" stroke="#ee0000" stroke-width="1.5" stroke-linecap="round"/>
<line x1="375.21" y1="552.3" x2="386.38" y2="567.6" stroke="#ee0000" stroke-width="1.5" stroke-linecap="round"/>
<line x1="386.38" y1="567.6" x2="397.55" y2="511.5" stroke="#00e000" stroke-width="1.5" stroke-linecap="round"/>
<line x1="397.55" y1="511.5" x2="408.72" y2="471.4" stroke="#00e000" stroke-width="1.5" stroke-linecap="round"/>
<line x1="408.72" y1="471.4" x2="419.89" y2="516.5" stroke="#ee0000" stroke-width="1.5" stroke-linecap="round"/>
<line x1="419.89" y1="516.5" x2="431.06" y2="492" stroke="#00e000" stroke-width="1.5" stroke-linecap="round"/>
<line x1="431.06" y1="492" x2="442.23" y2="527.1" stroke="#ee0000" stroke-width="1.5" stroke-linecap="round"/>
<line x1="442.23" y1="527.1" x2="453.4" y2="495.9" stroke="#00e000" stroke-width="1.5" stroke-linecap="round"/>
<line x1="453.4" y1="495.9" x2="464.57" y2="526" stroke="#ee0000" stroke-width="1.5" stroke-linecap="round"/>
<line x1="464.57" y1="526" x2="475.74" y2="556.9" stroke="#ee0000" stroke-width="1.5" stroke-linecap="round"/>
<line x1="475.74" y1="556.9" x2="486.91" y2="508" stroke="#00e000" stroke-width="1.5" stroke-linecap="round"/>
<line x1="486.91" y1="508" x2="498.08" y2="531.6" stroke="#ee0000" stroke-width="1.5" stroke-linecap="round"/>
<line x1="498.08" y1="531.6" x2="509.25" y2="493.6" stroke="#00e000" stroke-width="1.5" stroke-linecap="round"/>
<line x1="509.25" y1="493.6" x2="520.42" y2="467.5" stroke="#00e000" stroke-width="1.5" stroke-linecap="round"/>
<line x1="520.42" y1="467.5" x2="531.59" y2="515.6" stroke="#ee0000" stroke-width="1.5" stroke-linecap="round"/>
<line x1="531.59" y1="515.6" x2="542.76" y2="492.7" stroke="#00e000" stroke-width="1.5" stroke-linecap="round"/>
<line x1="542.76" y1="492.7" x2="553.93" y2="528" stroke="#ee0000" stroke-width="1.5" stroke-linecap="round"/>
<line x1="553.93" y1="528" x2="565.1" y2="496.6" stroke="#00e000" stroke-width="1.5" stroke-linecap="round"/>
<line x1="565.1" y1="496.6" x2="576.27" y2="529.4" stroke="#ee0000" stroke-width="1.5" stroke-linecap="round"/>
<line x1="576.27" y1="529.4" x2="587.44" y2="494.3" stroke="#00e000" stroke-width="1.5" stroke-linecap="round"/>
<line x1="587.44" y1="494.3" x2="598.61" y2="467.5" stroke="#00e000" stroke-width="1.5" stroke-linecap="round"/>
<text x="8.9" y="457.5" font-size="7.2" fill="#d8d8d8" textLength="59.3" lengthAdjust="spacingAndGlyphs" style="white-space:pre">M1  T3 Mfi  87.8725</text>
<text x="17" y="474.9" font-size="9.5" font-weight="bold" fill="#fff" stroke="#3a2a10" stroke-width="0.4" paint-order="stroke" textLength="74.2" lengthAdjust="spacingAndGlyphs">BOUNCE LVL 2</text>
<text x="17" y="497.2" font-size="9.5" font-weight="bold" fill="#fff" stroke="#3a2a10" stroke-width="0.4" paint-order="stroke" textLength="73.5" lengthAdjust="spacingAndGlyphs">BOUNCE LVL 1</text>
<text x="13.8" y="533.2" font-size="9.5" font-weight="bold" fill="#fff" stroke="#3a2a10" stroke-width="0.4" paint-order="stroke" textLength="73.3" lengthAdjust="spacingAndGlyphs">BOUNCE LVL 1</text>
<text x="14.2" y="560.4" font-size="9.5" font-weight="bold" fill="#fff" stroke="#3a2a10" stroke-width="0.4" paint-order="stroke" textLength="74.1" lengthAdjust="spacingAndGlyphs">BOUNCE LVL 2</text>
</g>
<text x="774.6" y="456" font-size="7.2" fill="#ececff" textLength="27" lengthAdjust="spacingAndGlyphs">103.3272</text>
<rect x="772.6" y="465.5" width="27.4" height="7.4" fill="#ff0000"/>
<text x="775" y="471.9" font-size="7.2" fill="#101010" textLength="23.5" lengthAdjust="spacingAndGlyphs">85.9950</text>
<rect x="772.6" y="488.8" width="27.4" height="7.4" fill="#ff0000"/>
<text x="775" y="495.2" font-size="7.2" fill="#101010" textLength="23.5" lengthAdjust="spacingAndGlyphs">66.4021</text>
<rect x="772.6" y="525.9" width="27.4" height="7.4" fill="#32cd32"/>
<text x="775" y="532.3" font-size="7.2" fill="#101010" textLength="23.5" lengthAdjust="spacingAndGlyphs">34.7521</text>
<rect x="772.6" y="553.3" width="27.4" height="7.4" fill="#32cd32"/>
<text x="775" y="559.7" font-size="7.2" fill="#101010" textLength="23.5" lengthAdjust="spacingAndGlyphs">12.1449</text>
<text x="774" y="573.3" font-size="7" fill="#e0e0f0" textLength="13" lengthAdjust="spacingAndGlyphs">0.00</text>
<text x="774" y="577.4" font-size="7" fill="#e0e0f0" textLength="22" lengthAdjust="spacingAndGlyphs">-6.6944</text>
<rect x="772" y="570.6" width="2" height="1" fill="#b0b0b0"/>
<rect x="5.7" y="579.5" width="1" height="2.5" fill="#b0b0b0"/>
<text x="5.5" y="588.9" font-size="7" fill="#e4e4e4" textLength="35.9" lengthAdjust="spacingAndGlyphs">28 Mar 2018</text>
<rect x="50.38" y="579.5" width="1" height="2.5" fill="#b0b0b0"/>
<text x="50.18" y="588.9" font-size="7" fill="#e4e4e4" textLength="38.75" lengthAdjust="spacingAndGlyphs">28 Mar 12:08</text>
<rect x="95.06" y="579.5" width="1" height="2.5" fill="#b0b0b0"/>
<text x="94.86" y="588.9" font-size="7" fill="#e4e4e4" textLength="38.75" lengthAdjust="spacingAndGlyphs">28 Mar 12:12</text>
<rect x="139.74" y="579.5" width="1" height="2.5" fill="#b0b0b0"/>
<text x="139.54" y="588.9" font-size="7" fill="#e4e4e4" textLength="38.75" lengthAdjust="spacingAndGlyphs">28 Mar 12:16</text>
<rect x="184.42" y="579.5" width="1" height="2.5" fill="#b0b0b0"/>
<text x="184.22" y="588.9" font-size="7" fill="#e4e4e4" textLength="38.75" lengthAdjust="spacingAndGlyphs">28 Mar 12:20</text>
<rect x="229.1" y="579.5" width="1" height="2.5" fill="#b0b0b0"/>
<text x="228.9" y="588.9" font-size="7" fill="#e4e4e4" textLength="38.75" lengthAdjust="spacingAndGlyphs">28 Mar 12:24</text>
<rect x="273.78" y="579.5" width="1" height="2.5" fill="#b0b0b0"/>
<text x="273.58" y="588.9" font-size="7" fill="#e4e4e4" textLength="38.75" lengthAdjust="spacingAndGlyphs">28 Mar 12:28</text>
<rect x="318.46" y="579.5" width="1" height="2.5" fill="#b0b0b0"/>
<text x="318.26" y="588.9" font-size="7" fill="#e4e4e4" textLength="38.75" lengthAdjust="spacingAndGlyphs">28 Mar 12:32</text>
<rect x="363.14" y="579.5" width="1" height="2.5" fill="#b0b0b0"/>
<text x="362.94" y="588.9" font-size="7" fill="#e4e4e4" textLength="38.75" lengthAdjust="spacingAndGlyphs">28 Mar 12:36</text>
<rect x="407.82" y="579.5" width="1" height="2.5" fill="#b0b0b0"/>
<text x="407.62" y="588.9" font-size="7" fill="#e4e4e4" textLength="38.75" lengthAdjust="spacingAndGlyphs">28 Mar 12:40</text>
<rect x="452.5" y="579.5" width="1" height="2.5" fill="#b0b0b0"/>
<text x="452.3" y="588.9" font-size="7" fill="#e4e4e4" textLength="38.75" lengthAdjust="spacingAndGlyphs">28 Mar 12:44</text>
<rect x="497.18" y="579.5" width="1" height="2.5" fill="#b0b0b0"/>
<text x="496.98" y="588.9" font-size="7" fill="#e4e4e4" textLength="38.75" lengthAdjust="spacingAndGlyphs">28 Mar 12:48</text>
<rect x="541.86" y="579.5" width="1" height="2.5" fill="#b0b0b0"/>
<text x="541.66" y="588.9" font-size="7" fill="#e4e4e4" textLength="38.75" lengthAdjust="spacingAndGlyphs">28 Mar 12:52</text>
<rect x="586.54" y="579.5" width="1" height="2.5" fill="#b0b0b0"/>
<text x="586.34" y="588.9" font-size="7" fill="#e4e4e4" textLength="38.75" lengthAdjust="spacingAndGlyphs">28 Mar 12:56</text>
<rect x="570" y="582" width="56" height="8" fill="#8a8a8a"/>
<text x="572.2" y="589.3" font-size="6.8" fill="#202020" textLength="51" lengthAdjust="spacingAndGlyphs">2018.03.28 12:57</text>
</svg></body></html>
